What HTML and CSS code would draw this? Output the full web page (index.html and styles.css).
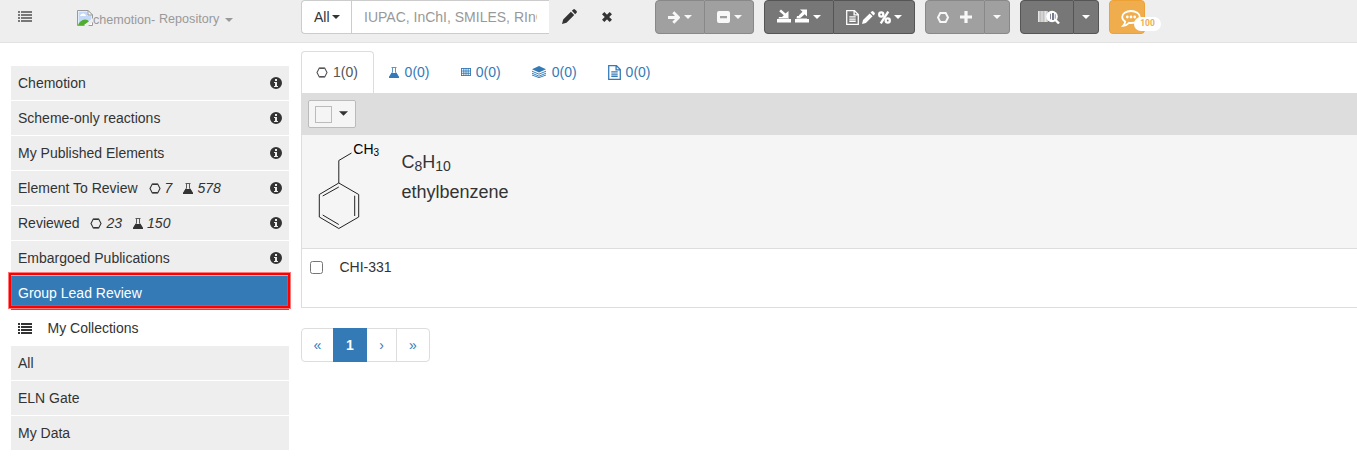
FILE: index.html
```html
<!DOCTYPE html>
<html lang="en">
<head>
<meta charset="utf-8">
<title>Chemotion Repository</title>
<link rel="stylesheet" href="styles.css">
</head>
<body>
<svg class="sprite" aria-hidden="true">
  <symbol id="list" viewBox="0 0 14 11"><path shape-rendering="crispEdges" d="M0 0h2v2H0zM3 0h11v2H3zM0 3h2v2H0zM3 3h11v2H3zM0 6h2v2H0zM3 6h11v2H3zM0 9h2v2H0zM3 9h11v2H3z"/></symbol>
  <symbol id="info" viewBox="0 0 12 12"><path fill-rule="evenodd" d="M6 0a6 6 0 1 0 0 12A6 6 0 0 0 6 0zM5 2h2v2H5zM4 5h3v4h1v1H4V9h1V6H4z"/></symbol>
  <symbol id="hex" viewBox="0 0 12 11"><path d="M3.300 1h5.400L11 5.500 8.700 10H3.300L1 5.500z" fill="none" stroke="currentColor" stroke-width="1.100"/><path d="M3.300 1.300h5.400M3.300 9.700h5.400" stroke="currentColor" stroke-width="1.300"/></symbol>
  <symbol id="ring" viewBox="0 0 12 11"><path d="M3.300 1h5.400L11 5.500 8.700 10H3.300L1 5.500z" fill="none" stroke="currentColor" stroke-width="1.900"/></symbol>
  <symbol id="flask" viewBox="0 0 10 11"><path d="M2.500 .5h5M3.500 1v4L.8 9.500v.8h8.400v-.8L6.500 5V1" fill="none" stroke="currentColor" stroke-width=".8"/><path d="M2.500 6h5L10 10v1H0v-1z"/></symbol>
  <symbol id="grid" viewBox="0 0 10 8"><path d="M0 .5h10M0 3h10M0 5.300h10M0 7.500h10M.5 0v8M2.800 0v8M5 0v8M7.200 0v8M9.500 0v8" stroke="currentColor" stroke-width=".9"/></symbol>
  <symbol id="layers" viewBox="0 0 14 12"><path d="M7 0l7 3.200L7 6.400 0 3.200z"/><path d="M0 5.200l7 3 7-3M0 7.200l7 3 7-3M0 9l7 2.600L14 9" fill="none" stroke="currentColor" stroke-width=".95"/></symbol>
  <symbol id="file" viewBox="0 0 12 14"><path d="M.6.600h7.200l3.600 3.600v9.200H.6zM7.500.600v4h4M3 6.500h6M3 8.500h6M3 10.500h6" fill="none" stroke="currentColor" stroke-width="1.200"/></symbol>
  <symbol id="pencil" viewBox="0 0 14 14"><path d="M10.300.600q1-1 2 0l1.100 1.100q1 1 0 2l-1.100 1.100-3.100-3.100zM8.300 2.600l3.100 3.100-7.200 7.200L0 14l1.100-4.200z"/></symbol>
  <symbol id="caret" viewBox="0 0 8 4"><path d="M0 0h8L4 4z"/></symbol>
  <symbol id="cross" viewBox="0 0 12 12"><path d="M2.200 2.200l7.600 7.600M9.800 2.200L2.200 9.800" stroke="currentColor" stroke-width="3.300"/></symbol>
  <symbol id="arrow" viewBox="0 0 12 13"><path d="M0 6.500h10M5.300 1.200l5.200 5.300-5.200 5.300" fill="none" stroke="currentColor" stroke-width="2.800"/></symbol>
  <symbol id="minus" viewBox="0 0 13 12"><path fill-rule="evenodd" d="M2 0h9q2 0 2 2v8q0 2-2 2H2q-2 0-2-2V2q0-2 2-2zM3 5v2.200h7V5z"/></symbol>
  <symbol id="import" viewBox="0 0 14 14"><path d="M0 10h14v3.500H0zM2 8h2.500l1 1H12v.5H1.500zM2.200 2.200L4 .5l4.500 4L11.500 2v7H4l2.800-2.700z"/></symbol>
  <symbol id="export" viewBox="0 0 14 14"><path d="M0 10h14v3.500H0zM2 7h2.500L6 9h6v.5H1.500zM5 .5h7v7L9.700 5.200 6 8.600 3.700 6.500l3.800-3.700z"/></symbol>
  <symbol id="percent" viewBox="0 0 12 12"><g fill="none" stroke="currentColor" stroke-width="2.100"><circle cx="3" cy="3.200" r="1.900"/><circle cx="9" cy="8.800" r="1.900"/><path d="M9.500.500l-7 11"/></g></symbol>
  <symbol id="plus" viewBox="0 0 12 12"><path d="M4.400 0h3.200v4.400H12v3.200H7.600V12H4.400V7.600H0V4.400h4.400z"/></symbol>
  <symbol id="scan" viewBox="0 0 22 14"><path d="M0 1h10v11H0z" opacity=".55"/><path d="M0 1h1.300v11H0zM3.500 1h1v11h-1zM6.500 1h2v11h-2z" opacity=".6"/><circle cx="14" cy="6.500" r="5.800"/><path d="M12 3.800h.9v5.400H12zM14 3h2v7h-2zM16.800 4.200h.8v4.600h-.8z" fill="#777b90"/><path d="M17 9.500l4 4" stroke="currentColor" stroke-width="2.400"/></symbol>
  <symbol id="comment" viewBox="0 0 20 17"><path d="M10 1c5 0 8.800 2.700 8.800 6S15 13 10 13q-1 0-2-.2Q5.500 15.500 2 15.800 4 14 4.200 11.600 1.200 9.800 1.200 7C1.200 3.700 5 1 10 1z" fill="none" stroke="currentColor" stroke-width="1.800"/><circle cx="6.300" cy="7" r="1.400"/><circle cx="10" cy="7" r="1.400"/><circle cx="13.700" cy="7" r="1.400"/></symbol>
</svg>

<header class="navbar">
  <svg class="icon list-icon menu"><use href="#list"/></svg>
  <a class="brand">
    <svg class="broken" viewBox="0 0 16 16"><path d="M.5.500h10.500l4.500 4.500v10.500H.5z" fill="#fff" stroke="#999"/><path d="M1.500 1.500h9v4h4v4L7 14.500H1.500z" fill="#c3d9f7"/><path d="M3 6q.2-2 2-2 1-1.600 2.400 0Q9 4.300 9 6z" fill="#fff"/><path d="M1 15q2-5 7-5.500 3 .2 4 2L7 15H1z" fill="#50ad32"/><path d="M16 8L7 16h4l5-4z" fill="#eee"/><path d="M11 .5v4.500h4.500z" fill="#fff" stroke="#999"/></svg>
    <span class="brand-alt">chemotion-</span><span class="brand-name">Repository</span>
    <svg class="icon caret"><use href="#caret"/></svg>
  </a>
  <div class="search">
    <button class="scope">All<svg class="icon caret"><use href="#caret"/></svg></button>
    <input class="query" type="text" placeholder="IUPAC, InChI, SMILES, RInChI">
  </div>
  <svg class="icon pencil draw"><use href="#pencil"/></svg>
  <svg class="icon cross"><use href="#cross"/></svg>

  <div class="group muted first">
    <button class="transfer"><svg class="icon arrow"><use href="#arrow"/></svg><svg class="icon caret"><use href="#caret"/></svg></button>
    <button class="remove"><svg class="icon minus"><use href="#minus"/></svg><svg class="icon caret"><use href="#caret"/></svg></button>
  </div>
  <div class="group dark">
    <button class="exchange"><svg class="icon tray"><use href="#import"/></svg><svg class="icon tray"><use href="#export"/></svg><svg class="icon caret"><use href="#caret"/></svg></button>
    <button class="report"><svg class="icon file"><use href="#file"/></svg><svg class="icon pencil"><use href="#pencil"/></svg><svg class="icon percent"><use href="#percent"/></svg><svg class="icon caret"><use href="#caret"/></svg></button>
  </div>
  <div class="group muted">
    <button class="create"><svg class="icon hex"><use href="#ring"/></svg><svg class="icon plus"><use href="#plus"/></svg></button>
    <button class="toggle"><svg class="icon caret"><use href="#caret"/></svg></button>
  </div>
  <div class="group dark">
    <button class="scanner"><svg class="icon scan"><use href="#scan"/></svg></button>
    <button class="toggle"><svg class="icon caret"><use href="#caret"/></svg></button>
  </div>
  <div class="group warning">
    <button class="notice"><svg class="icon comment"><use href="#comment"/></svg></button>
    <span class="badge">100</span>
  </div>
</header>

<div class="page">
  <nav class="sidebar">
    <div class="item">Chemotion<svg class="icon info"><use href="#info"/></svg></div>
    <div class="item">Scheme-only reactions<svg class="icon info"><use href="#info"/></svg></div>
    <div class="item">My Published Elements<svg class="icon info"><use href="#info"/></svg></div>
    <div class="item">Element To Review
      <span class="count"><svg class="icon hex"><use href="#hex"/></svg>7</span>
      <span class="count"><svg class="icon flask"><use href="#flask"/></svg>578</span>
      <svg class="icon info"><use href="#info"/></svg></div>
    <div class="item">Reviewed
      <span class="count"><svg class="icon hex"><use href="#hex"/></svg>23</span>
      <span class="count"><svg class="icon flask"><use href="#flask"/></svg>150</span>
      <svg class="icon info"><use href="#info"/></svg></div>
    <div class="item">Embargoed Publications<svg class="icon info"><use href="#info"/></svg></div>
    <div class="item selected">Group Lead Review</div>
    <div class="item heading"><svg class="icon list-icon"><use href="#list"/></svg>My Collections</div>
    <div class="item">All</div>
    <div class="item">ELN Gate</div>
    <div class="item">My Data</div>
  </nav>

  <main class="content">
    <div class="tabs">
      <a class="tab active"><i><svg class="icon hex"><use href="#hex"/></svg></i>1(0)</a>
      <a class="tab"><i><svg class="icon flask"><use href="#flask"/></svg></i>0(0)</a>
      <a class="tab"><i><svg class="icon grid"><use href="#grid"/></svg></i>0(0)</a>
      <a class="tab"><i class="wide"><svg class="icon layers"><use href="#layers"/></svg></i>0(0)</a>
      <a class="tab"><i class="medium"><svg class="icon file"><use href="#file"/></svg></i>0(0)</a>
    </div>
    <section class="panel">
      <div class="toolbar"><button class="select-all"><span class="box"></span><svg class="icon caret"><use href="#caret"/></svg></button></div>
      <div class="molecule">
        <svg class="structure" viewBox="302 135 84 113">
          <path d="M351.500 153L338.800 160.500V183L358.700 194.500V217L338.800 228.500 319.300 217V194.500L338.800 183M322.700 196L338.800 187M354.700 195.700V216M322.700 215L338.800 224.500"/>
          <text x="353.300" y="154.300">CH<tspan class="small" dy="1.700">3</tspan></text>
        </svg>
        <div class="naming"><div>C<sub>8</sub>H<sub>10</sub></div><div>ethylbenzene</div></div>
      </div>
      <div class="sample"><span class="check"></span>CHI-331</div>
    </section>
    <div class="pagination"><a>«</a><a class="current">1</a><a>›</a><a>»</a></div>
  </main>
</div>
</body>
</html>
```

FILE: styles.css
```css
* { box-sizing: border-box; }
body { margin: 0; height: 465px; overflow: hidden; background: #fff; color: #333; font: 14px/20px "Liberation Sans", Arial, sans-serif; }
button, input { margin: 0; padding: 0; font: inherit; color: inherit; }
.sprite { display: none; }
.icon { display: block; flex: none; fill: currentColor; }

.list-icon { width: 14px; height: 11px; }
.caret { width: 8px; height: 4px; }
.info { width: 12px; height: 12px; }
.hex { width: 12px; height: 11px; }
.flask { width: 10px; height: 11px; }
.grid { width: 10px; height: 8px; }
.layers { width: 14px; height: 12px; }
.file { width: 13px; height: 15px; }
.pencil { width: 13px; height: 13px; }
.cross { width: 12px; height: 12px; }
.arrow { width: 12px; height: 13px; }
.minus { width: 13px; height: 12px; }
.tray { width: 14px; height: 14px; }
.percent { width: 13px; height: 13px; }
.plus { width: 12px; height: 12px; }
.scan { width: 22px; height: 14px; }
.comment { width: 20px; height: 17px; }

/* top bar */
.navbar { display: flex; align-items: flex-start; height: 43px; background: #eee; border-bottom: 1px solid #e2e2e2; }
.menu { margin: 11px 0 0 18px; color: #777; }
.brand { display: flex; width: 224px; margin-left: 45px; padding-top: 10px; color: #999; font-size: 12.600px; line-height: 16px; }
.broken { width: 16px; height: 16px; }
.brand-alt { width: 66px; padding-top: 2px; }
.brand-name { width: 66px; padding-top: 1px; }
.brand .caret { margin-top: 8px; }
.search { display: flex; width: 248px; height: 34px; }
.scope { display: flex; align-items: center; gap: 2px; width: 50px; padding-left: 12px; background: #fff; border: 1px solid #ccc; border-right: 0; border-radius: 4px 0 0 4px; }
.query { width: 198px; padding: 6px 12px; background: #fff; border: solid #ccc; border-width: 1px 0 1px 1px; }
.query::placeholder { color: #999; opacity: 1; }
.draw { width: 15px; height: 15px; margin: 9px 0 0 13px; }
.cross { margin: 11px 0 0 24px; }

.group { position: relative; display: flex; margin-left: 10px; color: #fff; }
.group.first { margin-left: 42px; }
.group button { display: flex; align-items: center; justify-content: center; height: 34px; border: 1px solid; }
.group button + button { border-left: 0; }
.group button:first-child { border-radius: 4px 0 0 4px; }
.group button:last-of-type { border-radius: 0 4px 4px 0; }
.muted button { background: #a0a0a0; border-color: #888; color: #f8f8f8; }
.dark button { background: #777; border-color: #555; }
.warning button, .warning button:first-child { background: #f0ad4e; border-color: #eea236; border-radius: 4px; }
.group .transfer { width: 50px; gap: 4px; }
.group .remove { width: 49px; gap: 4px; }
.group .exchange { width: 70px; gap: 4px; }
.group .report { width: 81px; gap: 3px; }
.group .create { width: 60px; gap: 11px; padding-right: 1px; }
.group .toggle { width: 25px; }
.group .scanner { width: 54px; padding-left: 4px; }
.group .notice { width: 36px; padding-left: 6px; }
.exchange .tray { margin-top: -2px; }
.notice .comment { margin: 3px 0 0 2px; }
.badge { position: absolute; left: 25px; top: 17px; width: 27px; height: 14px; border-radius: 7px; background: #fff; color: #f0ad4e; font: bold 8.500px/13px Roboto, "Liberation Sans", sans-serif; text-align: center; }

/* collections */
.page { display: flex; padding-top: 8px; }
.sidebar { display: flex; flex-direction: column; gap: 1px; width: 278px; margin: 15px 12px 0 11px; }
.item { display: flex; align-items: center; height: 34px; padding: 0 7px; background: #eee; }
.item .info { margin-left: auto; }
.count { display: flex; align-items: center; gap: 4px; margin-left: 11px; font-style: italic; }
.selected { position: relative; background: #337ab7; color: #fff; }
/* highlight frame around the chosen collection */
.selected::after { content: ""; position: absolute; inset: -3px -1px 2px -2px; border: 2px solid #f00; box-shadow: 0 0 0 1px #f77, inset 0 0 0 1px rgba(255, 80, 80, .5); }
.heading { gap: 15.500px; background: #fff; }

/* element list */
.content { flex: 1; }
.tabs { display: flex; gap: 31px; height: 42px; }
.tab { display: flex; align-items: center; color: #337ab7; }
.tab i { display: flex; align-items: center; width: 15.300px; }
.tab i.wide { width: 20px; }
.tab i.medium { width: 18px; }
.tab.active { width: 73.300px; margin-right: -16px; padding: 0 0 1px 14px; border: 1px solid #ddd; border-bottom: 0; border-radius: 4px 4px 0 0; color: #555; }
.tab.active i { width: 17px; }
.panel { border-left: 1px solid #ddd; }
.toolbar { height: 42px; padding: 7px 6px; background: #ddd; }
.select-all { display: flex; align-items: center; gap: 7px; width: 48px; height: 28px; padding-left: 6px; background: #f5f5f5; border: 1px solid #bbb; border-radius: 2px; }
.box { width: 17px; height: 17px; border: 1px solid #bbb; }
.select-all .caret { width: 9px; height: 5px; margin-top: -1px; }
.molecule { display: flex; height: 114px; background: #f5f5f5; border-bottom: 1px solid #ddd; }
.structure { width: 84px; height: 113px; }
.structure path { fill: none; stroke: #222; stroke-width: 1; }
.structure text { font-size: 14px; fill: #000; }
.structure .small { font-size: 10px; }
.naming { padding: 12px 0 0 15.500px; font-size: 18px; line-height: 30px; }
.naming sub { position: relative; bottom: -3px; font-size: 14px; line-height: 0; vertical-align: baseline; }
.sample { display: flex; align-items: flex-start; gap: 16.500px; height: 59px; padding: 8px; border-bottom: 1px solid #ddd; }
.check { width: 13px; height: 13px; margin-top: 4px; border: 1px solid #767676; border-radius: 2.500px; }
.pagination { display: flex; width: 129px; height: 34px; margin-top: 20px; border: 1px solid #ddd; border-radius: 4px; color: #337ab7; }
.pagination a { width: 31px; line-height: 32px; text-align: center; }
.pagination .current { width: 34px; margin: -1px 0; background: #337ab7; color: #fff; font-weight: bold; line-height: 34px; }
.pagination a:nth-child(3) { width: 29px; }
.pagination a:last-child { width: 33px; border-left: 1px solid #ddd; }
```
